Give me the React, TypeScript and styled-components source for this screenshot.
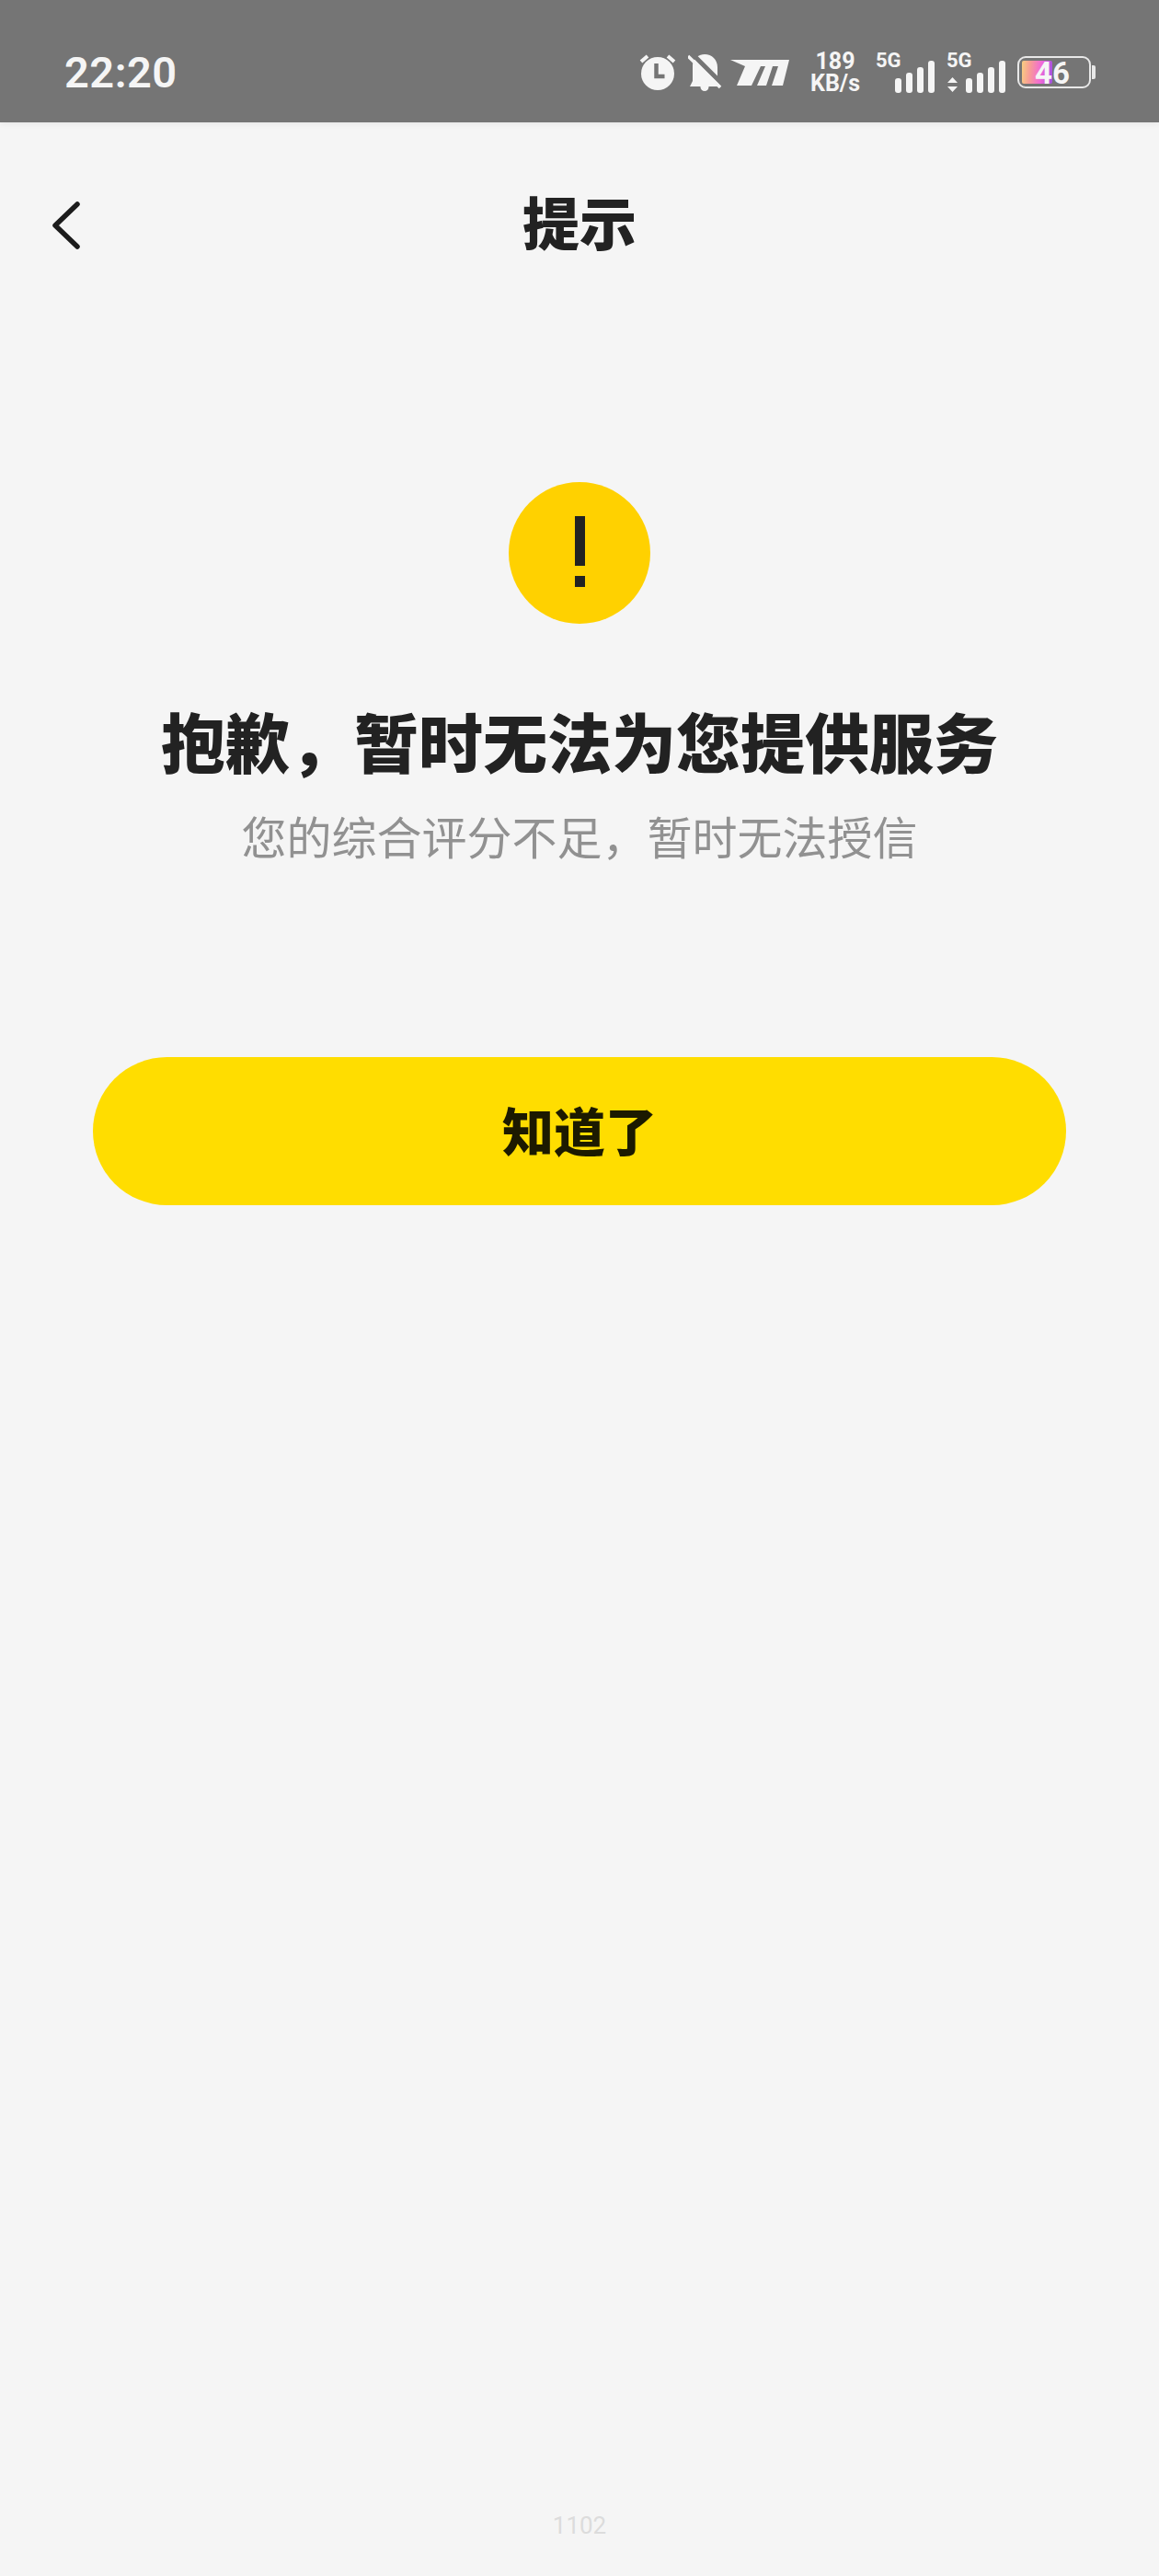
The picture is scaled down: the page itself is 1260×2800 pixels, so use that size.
import React from 'react';
import styled, { createGlobalStyle } from 'styled-components';

const GlobalStyle = createGlobalStyle`
  html,
  body {
    margin: 0;
    padding: 0;
    background: #f5f5f5;
  }
`;

const CJK = `"Noto Sans CJK SC", "Noto Sans", sans-serif`;

const App = () => {
  return (
    <Page>
      <GlobalStyle />
      <StatusBar>
        <Time>22:20</Time>
        <StatusIcons>
          <svg width="40" height="40" viewBox="0 0 40 40">
            <circle cx="20" cy="21" r="18" fill="#f5f5f5" />
            <path d="M18.500 10v14h9" fill="none" stroke="#757575" strokeWidth="4.500" />
            <path d="M2 8l7-6M38 8l-7-6" stroke="#f5f5f5" strokeWidth="4" />
          </svg>
          <BellIcon width="37" height="40" viewBox="0 0 37 40">
            <path d="M18 0C26 0 32 6 32 14V28L36 35H2L5 29V12C5 6 10 0 18 0Z" fill="#f5f5f5" />
            <circle cx="18" cy="35.500" r="4.500" fill="#f5f5f5" />
            <path d="M4-1L37 32" stroke="#757575" strokeWidth="5" />
            <path d="M0 2L35 36" stroke="#f5f5f5" strokeWidth="3.500" />
          </BellIcon>
          <BrandIcon width="64" height="28" viewBox="0 0 64 28">
            <path d="M0 0H64L57 28H45L52 7H46L39 28H29L38 7H33L23 28H7L16 7Z" fill="#f5f5f5" />
          </BrandIcon>
          <Speed>
            <span>189</span>
            <span>KB/s</span>
          </Speed>
          <Signal>
            <NetLabel>5G</NetLabel>
            <Bars>
              <Bar $height={16} />
              <Bar $height={22} />
              <Bar $height={28} />
              <Bar $height={35} />
            </Bars>
          </Signal>
          <Signal $arrows>
            <NetLabel>5G</NetLabel>
            <Arrows width="11" height="16" viewBox="0 0 11 16">
              <path d="M5.500 0L11 6H0zM5.500 16L0 10h11z" fill="#f5f5f5" />
            </Arrows>
            <Bars>
              <Bar $height={16} />
              <Bar $height={22} />
              <Bar $height={28} />
              <Bar $height={35} />
            </Bars>
          </Signal>
          <Battery>
            <BatteryFill />
            <BatteryLevel>46</BatteryLevel>
            <BatteryNub />
          </Battery>
        </StatusIcons>
      </StatusBar>
      <NavBar>
        <BackButton>
          <svg width="32" height="54" viewBox="0 0 32 54">
            <path d="M28 4L4 27l24 23" fill="none" stroke="#1c1c1c" strokeWidth="5.500" strokeLinecap="round" strokeLinejoin="round" />
          </svg>
        </BackButton>
        <NavTitle>提示</NavTitle>
      </NavBar>
      <Content>
        <WarnCircle>
          <WarnStem />
          <WarnDot />
        </WarnCircle>
        <Title>抱歉，暂时无法为您提供服务</Title>
        <SubTitle>您的综合评分不足，暂时无法授信</SubTitle>
        <ConfirmButton>知道了</ConfirmButton>
      </Content>
      <Version>1102</Version>
    </Page>
  );
};

export default App;

const Page = styled.div`
  display: flex;
  flex-direction: column;
  width: 1260px;
  height: 2800px;
  overflow: hidden;
  background: #f5f5f5;
`;

const StatusBar = styled.div`
  display: flex;
  align-items: center;
  justify-content: space-between;
  flex-shrink: 0;
  height: 133px;
  padding: 0 74px 0 70px;
  box-sizing: border-box;
  background: #757575;
  box-shadow: 0 2px 6px rgba(0, 0, 0, 0.06);
`;

const Time = styled.div`
  font-family: Roboto, sans-serif;
  font-size: 47px;
  font-weight: 600;
  color: #f5f5f5;
  letter-spacing: 0.5px;
  margin-top: 24px;
`;

const StatusIcons = styled.div`
  display: flex;
  align-items: center;
  margin-top: 24px;
  svg {
    display: block;
    flex-shrink: 0;
  }
`;

const BellIcon = styled.svg`
  margin-left: 13px;
`;

const BrandIcon = styled.svg`
  margin-left: 9px;
`;

const Speed = styled.div`
  display: flex;
  flex-direction: column;
  align-items: center;
  width: 56px;
  margin-left: 22px;
  font-family: Roboto, sans-serif;
  font-size: 25px;
  font-weight: 700;
  line-height: 24px;
  color: #f5f5f5;
`;

const Signal = styled.div<{ $arrows?: boolean }>`
  position: relative;
  display: flex;
  align-items: flex-end;
  justify-content: flex-end;
  gap: 9px;
  width: 64px;
  height: 44px;
  margin-left: ${(p) => (p.$arrows ? 13 : 16)}px;
`;

const NetLabel = styled.span`
  position: absolute;
  top: 0;
  left: 0;
  font-family: Roboto, sans-serif;
  font-size: 22px;
  font-weight: 700;
  line-height: 18px;
  color: #f5f5f5;
`;

const Arrows = styled.svg`
  margin-bottom: 1px;
`;

const Bars = styled.div`
  display: flex;
  align-items: flex-end;
  gap: 5px;
`;

const Bar = styled.div<{ $height: number }>`
  width: 7px;
  height: ${(p) => p.$height}px;
  border-radius: 3px;
  background: #f5f5f5;
`;

const Battery = styled.div`
  position: relative;
  display: flex;
  align-items: center;
  width: 80px;
  height: 35px;
  margin-left: 13px;
  box-sizing: border-box;
  border: 2px solid #e8e8e8;
  border-radius: 9px;
`;

const BatteryFill = styled.div`
  width: 33px;
  height: 25px;
  margin-left: 3px;
  border-radius: 2px;
  background: linear-gradient(95deg, #f8cf80 0%, #f89a98 28%, #f068d8 62%, #a050e0 100%);
`;

const BatteryLevel = styled.span`
  position: absolute;
  left: 17px;
  top: 50%;
  transform: translateY(-50%);
  font-family: Roboto, sans-serif;
  font-size: 33px;
  font-weight: 700;
  line-height: 1;
  color: #f5f5f5;
`;

const BatteryNub = styled.div`
  position: absolute;
  right: -7px;
  top: 8px;
  width: 4px;
  height: 15px;
  border-radius: 0 2px 2px 0;
  background: #e8e8e8;
`;

const NavBar = styled.div`
  position: relative;
  display: flex;
  align-items: center;
  justify-content: center;
  flex-shrink: 0;
  height: 220px;
`;

const BackButton = styled.div`
  position: absolute;
  left: 56px;
  top: 85px;
  svg {
    display: block;
  }
`;

const NavTitle = styled.div`
  margin-top: -6px;
  font-family: ${CJK};
  font-size: 62px;
  font-weight: 900;
  line-height: 80px;
  color: #222222;
`;

const Content = styled.div`
  display: flex;
  flex-direction: column;
  align-items: center;
  flex: 1;
  padding: 171px 101px 0;
`;

const WarnCircle = styled.div`
  display: flex;
  flex-direction: column;
  align-items: center;
  flex-shrink: 0;
  width: 154px;
  height: 154px;
  padding-top: 37px;
  box-sizing: border-box;
  border-radius: 50%;
  background: #ffd100;
`;

const WarnStem = styled.div`
  width: 11px;
  height: 54px;
  background: #222222;
`;

const WarnDot = styled.div`
  width: 11px;
  height: 12px;
  margin-top: 11px;
  background: #222222;
`;

const Title = styled.h1`
  margin: 77px 0 0;
  font-family: ${CJK};
  font-size: 70px;
  font-weight: 900;
  line-height: 100px;
  white-space: nowrap;
  color: #222222;
`;

const SubTitle = styled.div`
  margin-top: 21px;
  font-family: ${CJK};
  font-size: 49px;
  font-weight: 400;
  line-height: 64px;
  white-space: nowrap;
  color: #919191;
`;

const ConfirmButton = styled.button`
  display: block;
  width: 1058px;
  height: 161px;
  margin-top: 209px;
  padding: 0 0 7px;
  border: none;
  border-radius: 81px;
  background: #ffdd00;
  font-family: ${CJK};
  font-size: 56px;
  font-weight: 900;
  color: #1c1a00;
`;

const Version = styled.div`
  flex-shrink: 0;
  margin-bottom: 37px;
  text-align: center;
  font-family: Roboto, sans-serif;
  font-size: 26px;
  line-height: 36px;
  color: #dcdcdc;
`;
